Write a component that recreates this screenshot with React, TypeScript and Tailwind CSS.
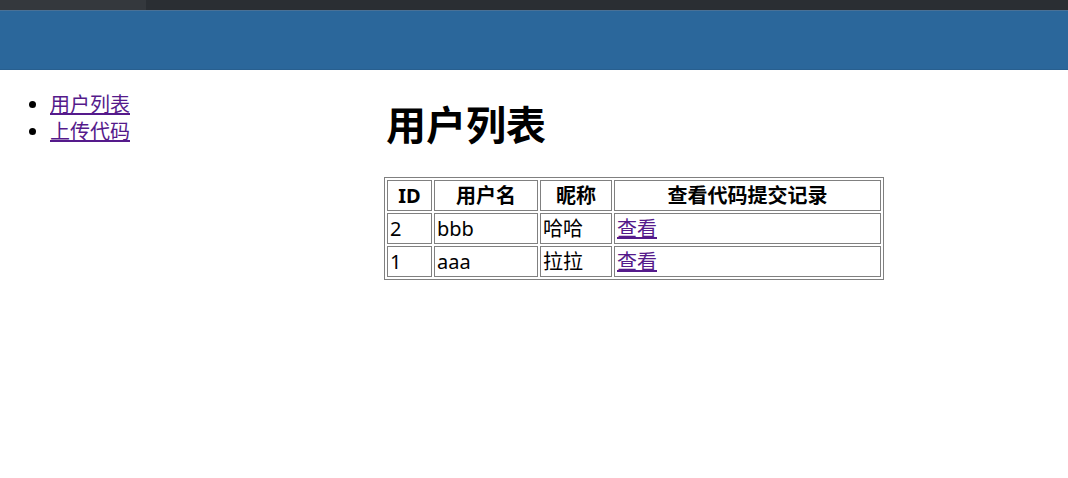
const users = [
  { id: 2, name: 'bbb', nick: '哈哈' },
  { id: 1, name: 'aaa', nick: '拉拉' },
]

export default function App() {
  return (
    <div className="min-h-screen bg-white text-black font-['Noto_Sans','Noto_Sans_CJK_SC',sans-serif]">
      <div className="flex h-[10px]">
        <div className="w-[146px] bg-[#34383d]" />
        <div className="flex-1 bg-[#2a2e33]" />
      </div>
      <div className="h-[60px] bg-[#2b679b] border-t border-[#4a7196] border-b border-b-[#285f8f]" />

      <div className="flex">
        <div className="w-[384px] shrink-0">
          <ul className="mt-[21px] ml-[10px] pl-[40px] list-disc text-[20px] leading-[27px]">
            <li>
              <a href="#" className="text-[#551a8b] underline">用户列表</a>
            </li>
            <li>
              <a href="#" className="text-[#551a8b] underline">上传代码</a>
            </li>
          </ul>
        </div>

        <div className="pt-[28px]">
          <h1 className="ml-[2px] text-[40px] leading-[54px] font-bold">用户列表</h1>
          <table className="mt-[25px] w-[500px] border border-[#808080] border-separate border-spacing-[2px] text-[20px] leading-[27px]">
            <thead>
              <tr>
                <th className="w-[45px] border border-[#808080] px-[2px] py-[1px] font-bold">ID</th>
                <th className="w-[104px] border border-[#808080] px-[2px] py-[1px] font-bold">用户名</th>
                <th className="w-[72px] border border-[#808080] px-[2px] py-[1px] font-bold">昵称</th>
                <th className="border border-[#808080] px-[2px] py-[1px] font-bold">查看代码提交记录</th>
              </tr>
            </thead>
            <tbody>
              {users.map((u) => (
                <tr key={u.id}>
                  <td className="border border-[#808080] px-[2px] py-[1px]">{u.id}</td>
                  <td className="border border-[#808080] px-[2px] py-[1px]">{u.name}</td>
                  <td className="border border-[#808080] px-[2px] py-[1px]">{u.nick}</td>
                  <td className="border border-[#808080] px-[2px] py-[1px]">
                    <a href="#" className="text-[#551a8b] underline">查看</a>
                  </td>
                </tr>
              ))}
            </tbody>
          </table>
        </div>
      </div>
    </div>
  )
}
